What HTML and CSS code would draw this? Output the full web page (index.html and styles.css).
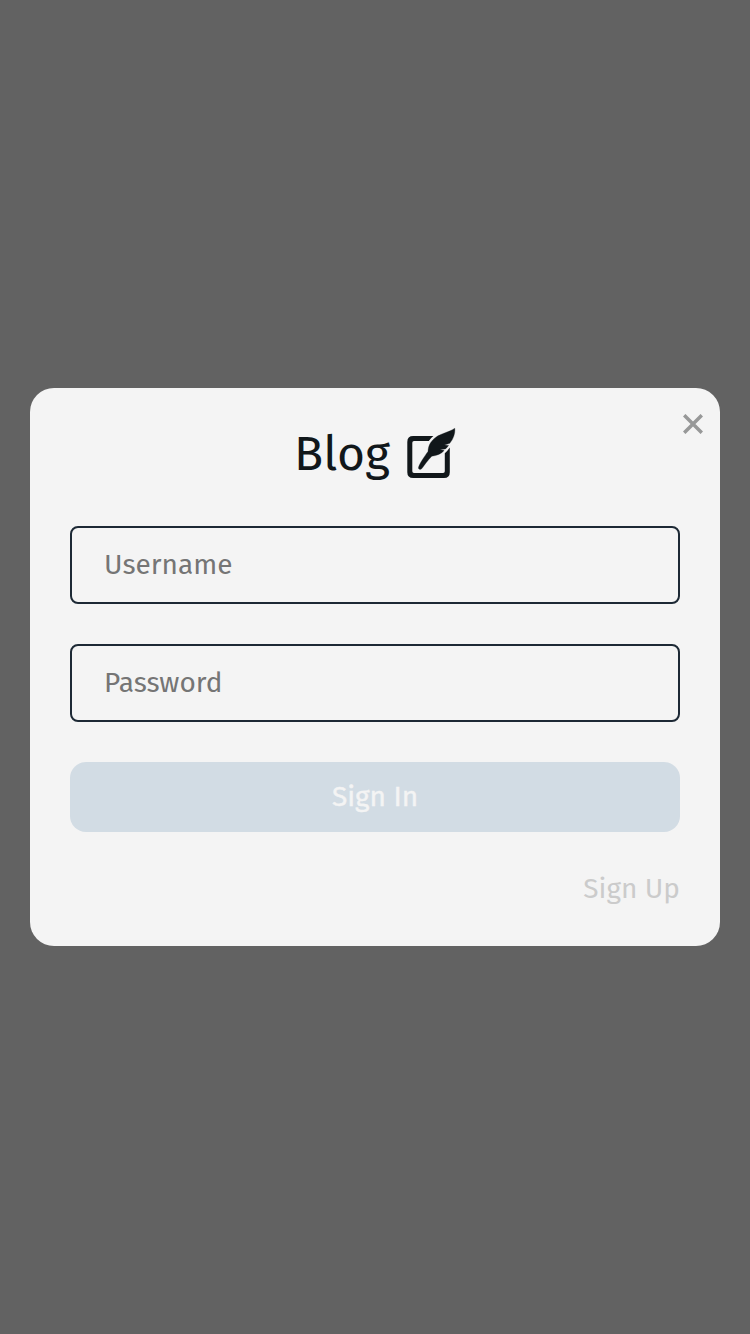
FILE: index.html
```html
<!DOCTYPE html>
<html lang="en">
<head>
<meta charset="utf-8">
<title>Blog</title>
<link rel="stylesheet" href="styles.css">
</head>
<body>
<main class="modal">
  <button class="close" type="button" aria-label="Close">
    <svg width="20" height="20" viewBox="0 0 20 20"><path d="M1.2 1.2 18.8 18.8M18.8 1.2 1.2 18.8" fill="none" stroke="#979898" stroke-width="3.5"/></svg>
  </button>
  <h1 class="brand">
    <span class="brand-name">Blog</span>
    <svg class="logo" width="50" height="52" viewBox="0 0 50 52">
      <path d="M28.4 8.1H8.2Q2.3 8.1 2.3 14V44.2Q2.3 50 8.2 50H39Q44.8 50 44.8 44.2V19.6Q42.6 23 39.8 25.2V43.3Q39.8 45 38.1 45H9Q7.3 45 7.3 43.3V14.8Q7.3 13.1 9 13.1H23.8Q25.6 10.3 28.4 8.1Z" fill="#11171a"/>
      <path d="M13.5 39.2C15 34.6 19.2 28.9 23 23.4C23.3 17 26.2 12.6 30.6 9.4C36.6 5 43.8 4.5 49.8 .3C50.3 6 48.2 11 44.8 15.3L39.4 16.9 43.6 17.4C42.3 19.3 41.2 20.5 40 21.1L35 21.6 39.2 22.5C36.4 25.7 31.8 27.8 26.8 28.2C23 32.1 19.4 37 16.9 40.6C15.7 42.1 12.8 41.4 13.5 39.2Z" fill="#11171a" stroke="#11171a" stroke-width=".3"/>
    </svg>
  </h1>
  <form class="form">
    <input class="field username" type="text" placeholder="Username" aria-label="Username">
    <input class="field password" type="password" placeholder="Password" aria-label="Password">
    <button class="submit" type="button"><span class="submit-label">Sign In</span></button>
  </form>
  <a class="signup">Sign Up</a>
</main>
</body>
</html>
```
FILE: styles.css
```css
* { box-sizing: border-box; }
body {
  margin: 0;
  min-height: 100vh;
  display: flex;
  align-items: center;
  justify-content: center;
  background: #626262;
  font-family: "Fira Sans", "Open Sans", sans-serif;
}
.modal {
  position: relative;
  width: 690px;
  height: 558px;
  padding: 40px;
  border-radius: 24px;
  background: #f4f4f4;
  display: flex;
  flex-direction: column;
}
.close {
  position: absolute;
  top: 26px;
  right: 17px;
  display: flex;
  padding: 0;
  border: 0;
  background: none;
}
.brand {
  display: flex;
  flex: 0 0 58px;
  justify-content: center;
  gap: 15px;
  margin: 0 0 40px;
  color: #11171a;
  font-size: 48px;
  font-weight: 400;
  line-height: 52px;
}
.logo { flex: none; margin-right: 1px; overflow: visible; }
.form { display: flex; flex-direction: column; flex: none; }
.field {
  height: 78px;
  margin: 0 0 40px;
  padding: 0 32px 2px;
  border: 2px solid #1d2935;
  border-radius: 8px;
  background: none;
  font-family: inherit;
  font-size: 28px;
}
.field::placeholder { color: #757575; opacity: 1; }
.submit {
  height: 70px;
  padding: 0 0 2px;
  border: 0;
  border-radius: 16px;
  background: #d2dce4;
  color: #f4f4f4;
  font-family: inherit;
  font-size: 28px;
  font-weight: 400;
  -webkit-text-stroke: 0.4px #f4f4f4;
}
.signup {
  align-self: flex-end;
  margin-top: 38px;
  color: #cbcbcb;
  font-size: 28px;
  line-height: 38px;
}
```
